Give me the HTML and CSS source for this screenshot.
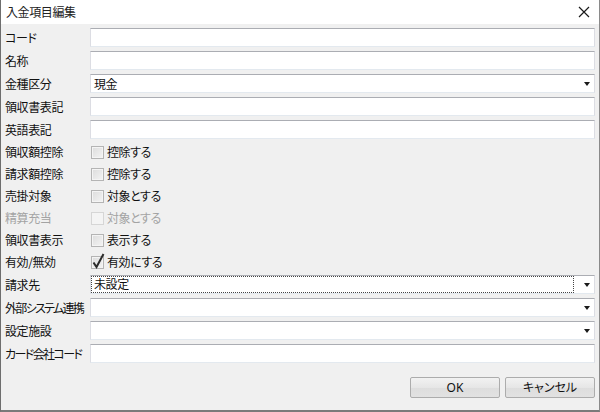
FILE: index.html
```html
<!DOCTYPE html>
<html lang="ja">
<head>
<meta charset="utf-8">
<title>入金項目編集</title>
<link rel="stylesheet" href="styles.css">
</head>
<body>
<div class="window">
  <div class="titlebar">
    <span class="title">入金項目編集</span>
    <svg class="close" width="12" height="12" viewBox="0 0 12 12"><path d="M1 1 L11 11 M11 1 L1 11" stroke="#1a1a1a" stroke-width="1.2" fill="none"/></svg>
  </div>
  <div class="body">
    <div class="form">
      <div class="row tall"><span class="label">コード</span><div class="field"></div></div>
      <div class="row tall"><span class="label">名称</span><div class="field"></div></div>
      <div class="row tall"><span class="label">金種区分</span><div class="field combo"><span class="value">現金</span><span class="arrow"></span></div></div>
      <div class="row tall"><span class="label">領収書表記</span><div class="field"></div></div>
      <div class="row tall"><span class="label">英語表記</span><div class="field"></div></div>
      <div class="row check"><span class="label">領収額控除</span><span class="cb"></span><span class="cbtext">控除する</span></div>
      <div class="row check"><span class="label">請求額控除</span><span class="cb"></span><span class="cbtext">控除する</span></div>
      <div class="row check"><span class="label">売掛対象</span><span class="cb"></span><span class="cbtext">対象とする</span></div>
      <div class="row check disabled"><span class="label">精算充当</span><span class="cb"></span><span class="cbtext">対象とする</span></div>
      <div class="row check"><span class="label">領収書表示</span><span class="cb"></span><span class="cbtext">表示する</span></div>
      <div class="row check"><span class="label">有効/無効</span><span class="cb checked"><svg class="tick" width="14" height="17" viewBox="0 0 14 17"><path d="M2.5 10.5 L5.5 15 L12.5 2" stroke="#2b2b2b" stroke-width="2" fill="none" stroke-linejoin="miter"/></svg></span><span class="cbtext">有効にする</span></div>
      <div class="row tall"><span class="label">請求先</span><div class="field combo editable"><span class="value focus">未設定</span><span class="arrow"></span></div></div>
      <div class="row tall"><span class="label tight">外部システム連携</span><div class="field combo"><span class="value"></span><span class="arrow"></span></div></div>
      <div class="row tall"><span class="label">設定施設</span><div class="field combo"><span class="value"></span><span class="arrow"></span></div></div>
      <div class="row tall"><span class="label tighter">カード会社コード</span><div class="field"></div></div>
    </div>
    <div class="footer">
      <button class="btn">OK</button>
      <button class="btn">キャンセル</button>
    </div>
  </div>
</div>
</body>
</html>
```

FILE: styles.css
```css
html, body {
  margin: 0;
  padding: 0;
}
body {
  width: 600px;
  height: 412px;
  overflow: hidden;
  font-family: "Noto Sans CJK JP", "Noto Sans", sans-serif;
  font-size: 12px;
  line-height: 16px;
  color: #111;
  font-feature-settings: "palt";
  letter-spacing: -0.4px;
}
.window {
  box-sizing: border-box;
  width: 600px;
  height: 412px;
  border-left: 1px solid #6e6e6e;
  border-right: 1px solid #8a8a8a;
  border-bottom: 2px solid #7a7a7a;
  background: #f0f0f0;
  display: flex;
  flex-direction: column;
}
.titlebar {
  height: 24px;
  flex: 0 0 24px;
  background: #ffffff;
  display: flex;
  align-items: center;
  justify-content: space-between;
  padding: 0 9px 0 5px;
}
.title {
  font-size: 12px;
  color: #222;
}
.close {
  display: block;
}
.body {
  flex: 1;
  display: flex;
  flex-direction: column;
  padding: 2px 4px 0 4px;
}
.form {
  display: flex;
  flex-direction: column;
}
.row {
  display: flex;
  align-items: center;
}
.row.tall {
  height: 23px;
}
.row.check {
  height: 22px;
}
.label {
  width: 85px;
  flex: 0 0 85px;
  white-space: nowrap;
  overflow: hidden;
  color: #111;
}
.label.tight {
  letter-spacing: -1.7px;
}
.label.tighter {
  letter-spacing: -1.6px;
}
.field {
  flex: 1;
  box-sizing: border-box;
  height: 19px;
  background: #fff;
  border: 1px solid #dcdde3;
  border-top-color: #abadb3;
  border-bottom-color: #e3e9ef;
  display: flex;
  align-items: center;
}
.combo {
  padding-left: 3px;
}
.combo .value {
  flex: 1;
  height: 15px;
  line-height: 15px;
}
.combo.editable {
  padding-left: 0;
}
.combo .value.focus {
  box-sizing: border-box;
  height: 17px;
  line-height: 15px;
  outline: 1px dotted #444;
  outline-offset: -1px;
  padding-left: 3px;
  margin-right: 4px;
}
.arrow {
  width: 0;
  height: 0;
  border-left: 3.5px solid transparent;
  border-right: 3.5px solid transparent;
  border-top: 4px solid #1a1a1a;
  margin: 0 4px 0 6px;
}
.cb {
  position: relative;
  box-sizing: border-box;
  width: 13px;
  height: 13px;
  flex: 0 0 13px;
  margin: 0 3px 0 1px;
  border: 1px solid #b4b4b4;
  background: linear-gradient(135deg, #dcdcdc, #f4f4f4);
  box-shadow: inset 0 0 0 1px #f4f4f4;
}
.cb.checked .tick {
  position: absolute;
  left: -1px;
  top: -5px;
}
.cbtext {
  color: #111;
}
.disabled .label,
.disabled .cbtext {
  color: #a3a3a3;
}
.disabled .cb {
  border-color: #d6d6d6;
  background: #f4f4f4;
  box-shadow: none;
}
.footer {
  display: flex;
  justify-content: flex-end;
  gap: 5px;
  margin-top: 12px;
}
.btn {
  box-sizing: border-box;
  width: 90px;
  height: 21px;
  padding: 0;
  border: 1px solid #acacac;
  border-radius: 2px;
  background: linear-gradient(#f2f2f2, #e6e6e6 50%, #dddddd 51%, #e2e2e2);
  font-family: "Noto Sans", "Noto Sans CJK JP", sans-serif;
  font-feature-settings: "palt";
  font-size: 12px;
  line-height: 17px;
  letter-spacing: 0;
  color: #111;
}
```
